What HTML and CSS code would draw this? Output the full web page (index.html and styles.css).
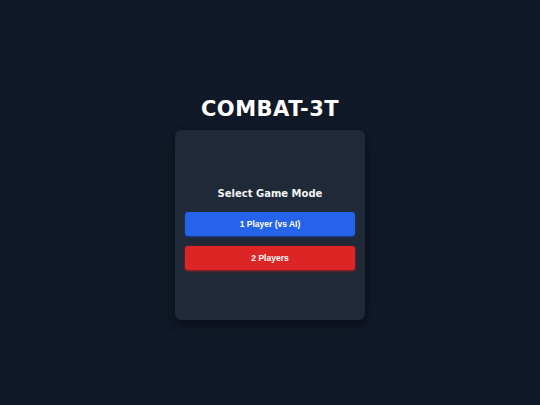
FILE: index.html
```html
<!DOCTYPE html>
<html>
<head>
<meta charset="utf-8">
<link rel="stylesheet" href="styles.css">
</head>
<body>
<main class="screen">
  <h1 class="title">COMBAT-3T</h1>
  <section class="card">
    <h2 class="heading">Select Game Mode</h2>
    <button class="btn btn-blue">1 Player (vs AI)</button>
    <button class="btn btn-red">2 Players</button>
  </section>
</main>
</body>
</html>
```
FILE: styles.css
```css
html, body {
  margin: 0;
  padding: 0;
  background: #111827;
}
.screen {
  width: 540px;
  height: 405px;
  box-sizing: border-box;
  padding-top: 97px;
  display: flex;
  flex-direction: column;
  align-items: center;
}
.title {
  margin: 0 0 8px 0;
  font-family: "DejaVu Sans", sans-serif;
  font-weight: bold;
  font-size: 21px;
  letter-spacing: 0.5px;
  line-height: 25px;
  color: #ffffff;
}
.card {
  width: 190px;
  height: 190px;
  box-sizing: border-box;
  padding: 8px 10px 0 10px;
  background: #1f2937;
  border-radius: 6px;
  box-shadow: 0 4px 12px rgba(0, 0, 0, 0.45);
  display: flex;
  flex-direction: column;
  justify-content: center;
}
.heading {
  margin: 0 0 12px 0;
  font-family: "DejaVu Sans", sans-serif;
  font-weight: bold;
  font-size: 10px;
  line-height: 12px;
  color: #f3f4f6;
  text-align: center;
}
.btn {
  display: block;
  width: 170px;
  height: 24px;
  border: none;
  border-radius: 3px;
  padding: 0;
  font-family: "Liberation Sans", Arial, sans-serif;
  font-weight: bold;
  font-size: 8.5px;
  color: #ffffff;
}
.btn-blue {
  background: #2563eb;
  box-shadow: 0 1px 2px rgba(30, 64, 175, 0.8);
  margin-bottom: 10px;
}
.btn-red {
  background: #dc2626;
  box-shadow: 0 1px 3px rgba(185, 28, 28, 0.9);
}
```
